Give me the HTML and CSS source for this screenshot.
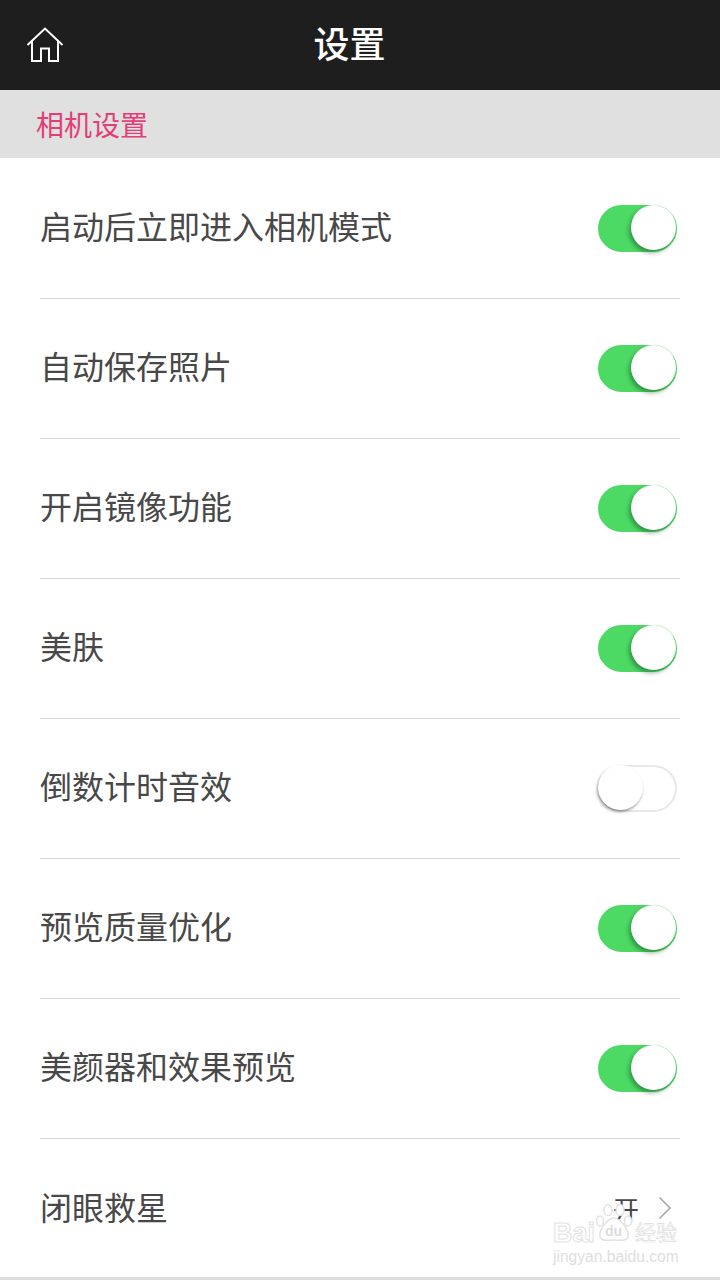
FILE: index.html
```html
<!DOCTYPE html>
<html lang="zh-CN">

<head>
    <meta charset="UTF-8">
    <title>设置</title>
    <link rel="stylesheet" href="styles.css">
</head>

<body>
    <div class="page">
        <header class="topbar">
            <svg class="home-icon" width="38" height="36" viewBox="0 0 38 36">
                <path d="M1.500 18 L19 1.500 L36.500 18" />
                <path d="M6 14 V34 H15 V21.500 H23 V34 H32 V14" />
            </svg>
            <h1 class="topbar-title">设置</h1>
        </header>
        <div class="section-head">相机设置</div>
        <ul class="rows">
            <li class="row"><span class="row-label">启动后立即进入相机模式</span><span class="switch on"><i></i></span></li>
            <li class="row"><span class="row-label">自动保存照片</span><span class="switch on"><i></i></span></li>
            <li class="row"><span class="row-label">开启镜像功能</span><span class="switch on"><i></i></span></li>
            <li class="row"><span class="row-label">美肤</span><span class="switch on"><i></i></span></li>
            <li class="row"><span class="row-label">倒数计时音效</span><span class="switch"><i></i></span></li>
            <li class="row"><span class="row-label">预览质量优化</span><span class="switch on"><i></i></span></li>
            <li class="row"><span class="row-label">美颜器和效果预览</span><span class="switch on"><i></i></span></li>
            <li class="row last">
                <span class="row-label">闭眼救星</span>
                <span class="row-value">开
                    <svg class="chevron" width="14" height="24" viewBox="0 0 14 24">
                        <path d="M1.500 1.500 L12 12 L1.500 22.500" />
                    </svg>
                </span>
            </li>
        </ul>
        <div class="watermark">
            <span class="wm-brand">Bai</span>
            <svg class="wm-paw" width="38" height="40" viewBox="0 0 38 40">
                <ellipse cx="5" cy="18" rx="3.500" ry="5" />
                <ellipse cx="13" cy="7" rx="4" ry="5.500" />
                <ellipse cx="25" cy="7" rx="4" ry="5.500" />
                <ellipse cx="33" cy="18" rx="3.500" ry="5" />
                <path d="M19 15 C25 15 35 27 33 34 C31 39 24 37 19 37 C14 37 7 39 5 34 C3 27 13 15 19 15 Z" />
            </svg>
            <span class="wm-du">du</span>
            <span class="wm-cn">经验</span>
            <div class="wm-url">jingyan.baidu.com</div>
        </div>
    </div>
</body>

</html>
```

FILE: styles.css
```css
* {
    box-sizing: border-box;
}

html,
body {
    margin: 0;
    padding: 0;
}

body {
    font-family: "Roboto", "Noto Sans CJK SC", sans-serif;
    background: #fff;
}

.page {
    position: relative;
    display: flex;
    flex-direction: column;
    width: 720px;
    height: 1280px;
    overflow: hidden;
}

.topbar {
    position: relative;
    display: flex;
    align-items: center;
    justify-content: center;
    flex: none;
    height: 90px;
    background: #1e1e1e;
}

.home-icon {
    position: absolute;
    left: 26px;
    top: 27px;
    fill: none;
    stroke: #fff;
    stroke-width: 2;
}

.topbar-title {
    margin: 0 21px 0 0;
    padding-bottom: 6px;
    color: #fff;
    font-size: 36px;
    font-weight: 500;
}

.section-head {
    flex: none;
    height: 68px;
    padding: 6px 0 0 36px;
    color: #e33e75;
    background: #e0e0e0;
    font-size: 28px;
    line-height: 62px;
}

.rows {
    flex: 1;
    margin: 0;
    padding: 1px 0 0;
    list-style: none;
    border-bottom: 3px solid #dcdcdc;
}

.row {
    display: flex;
    align-items: center;
    justify-content: space-between;
    height: 140px;
    margin: 0 40px;
    padding-right: 3px;
    border-bottom: 1px solid #d9d9d9;
}

.row.last {
    height: 138px;
    border-bottom: 0;
}

.row.last .row-label {
    padding-bottom: 4px;
}

.row-label {
    padding-bottom: 8px;
    color: #484848;
    font-size: 32px;
}

.switch {
    position: relative;
    display: block;
    width: 79px;
    height: 47px;
    margin-bottom: 1px;
    background: #fff;
    border: 2px solid #e8e8e8;
    border-radius: 24px;
}

.switch i {
    position: absolute;
    left: -2px;
    top: -2px;
    width: 45px;
    height: 45px;
    background: #fff;
    border-radius: 50%;
    box-shadow: -1px 2px 3px rgba(0, 0, 0, 0.4);
}

.switch.on {
    background: #4cd964;
    border-color: #4cd964;
}

.switch.on i {
    left: auto;
    right: -1px;
    box-shadow: -2px 3px 4px rgba(0, 50, 20, 0.4);
}

.row-value {
    display: flex;
    align-items: center;
    gap: 19px;
    padding-right: 5px;
    color: #484848;
    font-size: 26px;
}

.chevron {
    fill: none;
    stroke: #a8a8a8;
    stroke-width: 1.600;
}

.watermark {
    position: absolute;
    left: 553px;
    top: 1203px;
    width: 128px;
    height: 62px;
    pointer-events: none;
}

.wm-brand {
    position: absolute;
    left: 0;
    top: 15px;
    color: #fff;
    font-family: "Liberation Sans", sans-serif;
    font-size: 27px;
    font-weight: 700;
    line-height: 30px;
    -webkit-text-stroke: 1px #e2e2e2;
}

.wm-paw {
    position: absolute;
    left: 42px;
    top: 0;
    fill: #fff;
    stroke: #e2e2e2;
    stroke-width: 1.500;
}

.wm-du {
    position: absolute;
    left: 52px;
    top: 20px;
    color: #dcdcdc;
    font-family: "Liberation Sans", sans-serif;
    font-size: 14px;
    font-weight: 700;
    line-height: 16px;
}

.wm-cn {
    position: absolute;
    left: 82px;
    top: 19px;
    color: #fff;
    font-size: 21px;
    line-height: 22px;
    -webkit-text-stroke: 0.7px #dedede;
}

.wm-url {
    position: absolute;
    left: 0;
    top: 45px;
    color: #dedede;
    font-family: "Liberation Sans", sans-serif;
    font-size: 15.600px;
    line-height: 18px;
    white-space: nowrap;
}
```
